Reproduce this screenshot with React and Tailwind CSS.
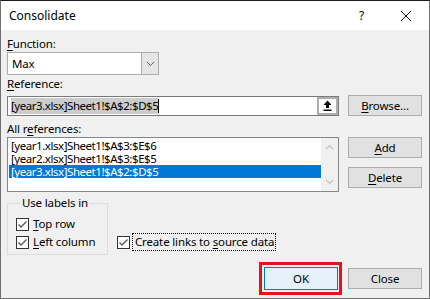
import React from "react";

function U({ children }) {
  return <span className="underline underline-offset-[2px] decoration-1">{children}</span>;
}

function Check() {
  return (
    <span className="w-[13px] h-[13px] border border-[#333333] bg-white flex items-center justify-center shrink-0">
      <svg width="11" height="11" viewBox="0 0 11 11">
        <path d="M1.5 5.5 L4 8 L9.5 2.5" fill="none" stroke="#555555" strokeWidth="1.3" />
      </svg>
    </span>
  );
}

function Btn({ children, className = "" }) {
  return (
    <div
      className={`w-[74px] h-[21px] border border-[#adadad] bg-[#e1e1e1] flex items-center justify-center ${className}`}
    >
      {children}
    </div>
  );
}

export default function App() {
  return (
    <div
      className="w-[430px] h-[299px] border border-[#707070] border-t-[#1a1a1a] bg-[#f0f0f0] flex flex-col text-[11.5px] leading-[14px] tracking-[-0.15px] text-black overflow-hidden"
      style={{ fontFamily: "'Noto Sans', 'Liberation Sans', sans-serif" }}
    >
      {/* title bar */}
      <div className="h-[29px] bg-white flex items-center pl-[8px] shrink-0">
        <span className="text-[12px] tracking-normal">Consolidate</span>
        <span className="ml-auto mr-[36px] text-[12px]">?</span>
        <svg width="12" height="12" viewBox="0 0 12 12" className="mr-[17px]">
          <path d="M1 1 L11 11 M11 1 L1 11" stroke="#111111" strokeWidth="1" />
        </svg>
      </div>

      {/* body */}
      <div className="flex flex-col pl-[6px] pr-[7px]">
        <div className="mt-[7px]">
          <U>F</U>unction:
        </div>
        <div className="mt-[1px] w-[152px] h-[23px] border border-[#adadad] bg-white flex">
          <div className="flex-1 flex items-center pl-[4px]">Max</div>
          <div className="w-[17px] bg-[#e5e5e5] border-l border-[#adadad] flex items-center justify-center">
            <svg width="9" height="6" viewBox="0 0 9 6">
              <path d="M1 1 L4.5 4.5 L8 1" fill="none" stroke="#606060" strokeWidth="1" />
            </svg>
          </div>
        </div>

        <div className="mt-[2px]">
          <U>R</U>eference:
        </div>
        <div className="mt-[4px] flex items-center">
          <div className="w-[332px] h-[20px] border border-[#7a7a7a] bg-white flex items-center">
            <span className="ml-[3px] bg-[#cccccc] leading-[16px] tracking-[-0.45px]">
              [year3.xlsx]Sheet1!$A$2:$D$5
            </span>
            <span className="w-[1px] h-[14px] bg-black" />
            <div className="ml-auto w-[21px] h-[18px] border-2 border-[#adadad] bg-white flex items-center justify-center">
              <svg width="9" height="11" viewBox="0 0 9 11">
                <path d="M4.5 0.5 L8.5 5 L6 5 L6 8 L3 8 L3 5 L0.5 5 Z" fill="#000000" />
                <rect x="0.5" y="9.5" width="8" height="1.5" fill="#000000" />
              </svg>
            </div>
          </div>
          <Btn className="ml-auto">
            <span>
              <U>B</U>rowse...
            </span>
          </Btn>
        </div>

        <div className="mt-[6px]">
          All r<U>e</U>ferences:
        </div>
        <div className="mt-[1px] flex items-start">
          <div className="w-[332px] h-[55px] border border-[#828790] bg-white flex">
            <div className="flex-1 flex flex-col pt-[1px] pl-[1px] tracking-[-0.45px]">
              <div className="h-[13px] leading-[13px] pl-[2px]">[year1.xlsx]Sheet1!$A$3:$E$6</div>
              <div className="h-[13px] leading-[13px] pl-[2px]">[year2.xlsx]Sheet1!$A$3:$E$5</div>
              <div className="h-[13px] leading-[13px] pl-[2px] bg-[#0078d7] text-white">
                [year3.xlsx]Sheet1!$A$2:$D$5
              </div>
            </div>
            <div className="w-[17px] bg-[#f0f0f0] flex flex-col items-center justify-between py-[6px]">
              <svg width="9" height="6" viewBox="0 0 9 6">
                <path d="M1 5 L4.5 1.5 L8 5" fill="none" stroke="#c2c2c2" strokeWidth="1.2" />
              </svg>
              <svg width="9" height="6" viewBox="0 0 9 6">
                <path d="M1 1 L4.5 4.5 L8 1" fill="none" stroke="#c2c2c2" strokeWidth="1.2" />
              </svg>
            </div>
          </div>
          <div className="ml-auto flex flex-col gap-[9px]">
            <Btn>
              <span>
                <U>A</U>dd
              </span>
            </Btn>
            <Btn>
              <span>
                <U>D</U>elete
              </span>
            </Btn>
          </div>
        </div>

        <div className="mt-[4px] flex items-end">
          <fieldset className="w-[101px] border border-[#dcdcdc] pl-[8px] pb-[3px]">
            <legend className="ml-[4px] px-[2px] leading-[14px]">Use labels in</legend>
            <div className="mt-[5px] h-[18px] flex items-center gap-[4px]">
              <Check />
              <span>
                <U>T</U>op row
              </span>
            </div>
            <div className="h-[18px] flex items-center gap-[4px]">
              <Check />
              <span>
                <U>L</U>eft column
              </span>
            </div>
          </fieldset>
          <div className="ml-[9px] mb-[4px] h-[18px] flex items-center gap-[2px]">
            <Check />
            <span className="border border-dotted border-black h-[18px] pl-[2px] pr-[1px] flex items-center">
              <span>
                Create links to <U>s</U>ource data
              </span>
            </span>
          </div>
        </div>

        <div className="mt-[7px] flex items-center justify-end">
          <div className="border-[3px] border-[#e81123] p-[2px] pr-[1px]">
            <div className="w-[74px] h-[23px] border border-[#0078d7] bg-[#e5f1fb] flex items-center justify-center">
              OK
            </div>
          </div>
          <Btn className="ml-[6px]">Close</Btn>
        </div>
      </div>
    </div>
  );
}
